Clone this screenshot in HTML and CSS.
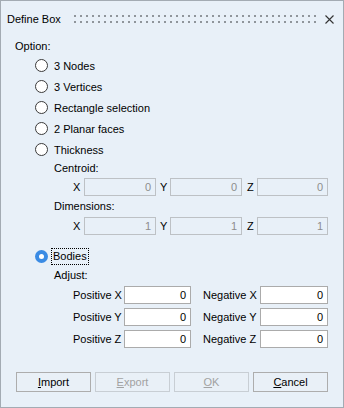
FILE: index.html
```html
<!DOCTYPE html>
<html>
<head>
<meta charset="utf-8">
<link rel="stylesheet" href="styles.css">
</head>
<body>
<div class="window">
  <div class="titlebar">
    <span class="title">Define Box</span>
    <svg class="grip" width="242" height="8" viewBox="0 0 242 8">
      <defs>
        <pattern id="dots" width="6" height="6" patternUnits="userSpaceOnUse">
          <rect x="0" y="0" width="2" height="2" fill="#8f959b"/>
        </pattern>
      </defs>
      <rect x="0" y="0" width="242" height="8" fill="url(#dots)"/>
    </svg>
    <svg class="close" width="9" height="9" viewBox="0 0 9 9">
      <path d="M0.5 0.5 L8.5 8.5 M8.5 0.5 L0.5 8.5" stroke="#333" stroke-width="1.1" fill="none"/>
    </svg>
  </div>
  <div class="content">
    <div class="option">Option:</div>
    <div class="radio-row"><span class="radio"></span><span>3 Nodes</span></div>
    <div class="radio-row"><span class="radio"></span><span>3 Vertices</span></div>
    <div class="radio-row"><span class="radio"></span><span>Rectangle selection</span></div>
    <div class="radio-row"><span class="radio"></span><span>2 Planar faces</span></div>
    <div class="radio-row"><span class="radio"></span><span>Thickness</span></div>
    <div class="sub-label centroid">Centroid:</div>
    <div class="xyz-row">
      <span class="axis ax-x">X</span><span class="field disabled w72">0</span>
      <span class="axis ax-y">Y</span><span class="field disabled w72">0</span>
      <span class="axis ax-z">Z</span><span class="field disabled w71">0</span>
    </div>
    <div class="sub-label dims">Dimensions:</div>
    <div class="xyz-row">
      <span class="axis ax-x">X</span><span class="field disabled w72">1</span>
      <span class="axis ax-y">Y</span><span class="field disabled w72">1</span>
      <span class="axis ax-z">Z</span><span class="field disabled w71">1</span>
    </div>
    <div class="radio-row bodies"><span class="radio checked"></span><span class="focus">Bodies</span></div>
    <div class="sub-label adjust">Adjust:</div>
    <div class="adjust-grid">
      <span class="adj-label">Positive X</span><span class="field enabled">0</span>
      <span class="adj-label neg">Negative X</span><span class="field enabled">0</span>
      <span class="adj-label">Positive Y</span><span class="field enabled">0</span>
      <span class="adj-label neg">Negative Y</span><span class="field enabled">0</span>
      <span class="adj-label">Positive Z</span><span class="field enabled">0</span>
      <span class="adj-label neg">Negative Z</span><span class="field enabled">0</span>
    </div>
  </div>
  <div class="buttons">
    <button class="btn"><u>I</u>mport</button>
    <button class="btn off"><u>E</u>xport</button>
    <button class="btn off"><u>O</u>K</button>
    <button class="btn"><u>C</u>ancel</button>
  </div>
</div>
</body>
</html>
```
FILE: styles.css
```css
html, body {
  margin: 0;
  padding: 0;
}

body {
  font-family: "Liberation Sans", Arial, sans-serif;
  font-size: 11px;
  color: #000;
}

.window {
  width: 344px;
  height: 408px;
  box-sizing: border-box;
  border: 1px solid #a3abb3;
  background: #e8f0f8;
  display: flex;
  flex-direction: column;
}

.titlebar {
  height: 36px;
  display: flex;
  align-items: center;
  padding: 0 9px 0 6px;
}

.title {
  line-height: 14px;
}

.grip {
  display: block;
  margin-left: auto;
  margin-right: 9px;
}

.close {
  display: block;
}

.content {
  padding-left: 14px;
}

.option {
  height: 18px;
  line-height: 18px;
}

.radio-row {
  display: flex;
  align-items: center;
  height: 21px;
  padding-left: 20px;
}

.radio {
  width: 13px;
  height: 13px;
  box-sizing: border-box;
  border: 1px solid #3a3a3a;
  border-radius: 50%;
  background: #fff;
  margin-right: 6px;
  flex: none;
}

.radio.checked {
  border: none;
  background: #3a8be4;
  margin-right: 3px;
  display: flex;
  align-items: center;
  justify-content: center;
}

.radio.checked::after {
  content: "";
  width: 5px;
  height: 5px;
  border-radius: 50%;
  background: #fff;
}

.sub-label {
  padding-left: 39px;
}

.centroid {
  height: 17px;
  line-height: 17px;
}

.dims {
  height: 19px;
  line-height: 19px;
}

.adjust {
  height: 18px;
  line-height: 18px;
}

.xyz-row {
  display: flex;
  align-items: center;
  height: 20px;
  padding-left: 58px;
}

.axis {
  flex: none;
}

.ax-x {
  width: 11px;
}

.ax-y {
  width: 10px;
  margin-left: 4px;
}

.ax-z {
  width: 10px;
  margin-left: 5px;
}

.field {
  height: 18px;
  box-sizing: border-box;
  border: 1px solid #b4b4b4;
  text-align: right;
  padding-right: 4px;
  line-height: 16px;
  flex: none;
}

.w72 {
  width: 72px;
}

.w71 {
  width: 71px;
}

.field.disabled {
  color: #8d8d8d;
  border-color: #bdc1c5;
}

.field.enabled {
  background: #fff;
  border-color: #ababab;
}

.bodies {
  margin-top: 10px;
  height: 20px;
}

.focus {
  border: 1px dotted #000;
  padding: 0 1px;
  line-height: 15px;
}

.adjust-grid {
  display: grid;
  grid-template-columns: 51px 67px 69px 68px;
  grid-auto-rows: 22px;
  align-items: center;
  padding-left: 58px;
}

.adj-label.neg {
  padding-left: 12px;
}

.buttons {
  margin-top: auto;
  display: flex;
  gap: 4px;
  padding: 0 15px 15px 15px;
}

.btn {
  width: 75px;
  height: 20px;
  box-sizing: border-box;
  border: 1px solid #adadad;
  background: #e9f0f7;
  font-family: inherit;
  font-size: 11px;
  color: #000;
  padding: 0;
  margin: 0;
  line-height: 18px;
  text-align: center;
}

.btn.off {
  color: #a2a2a2;
  border-color: #c8ced4;
}
```
